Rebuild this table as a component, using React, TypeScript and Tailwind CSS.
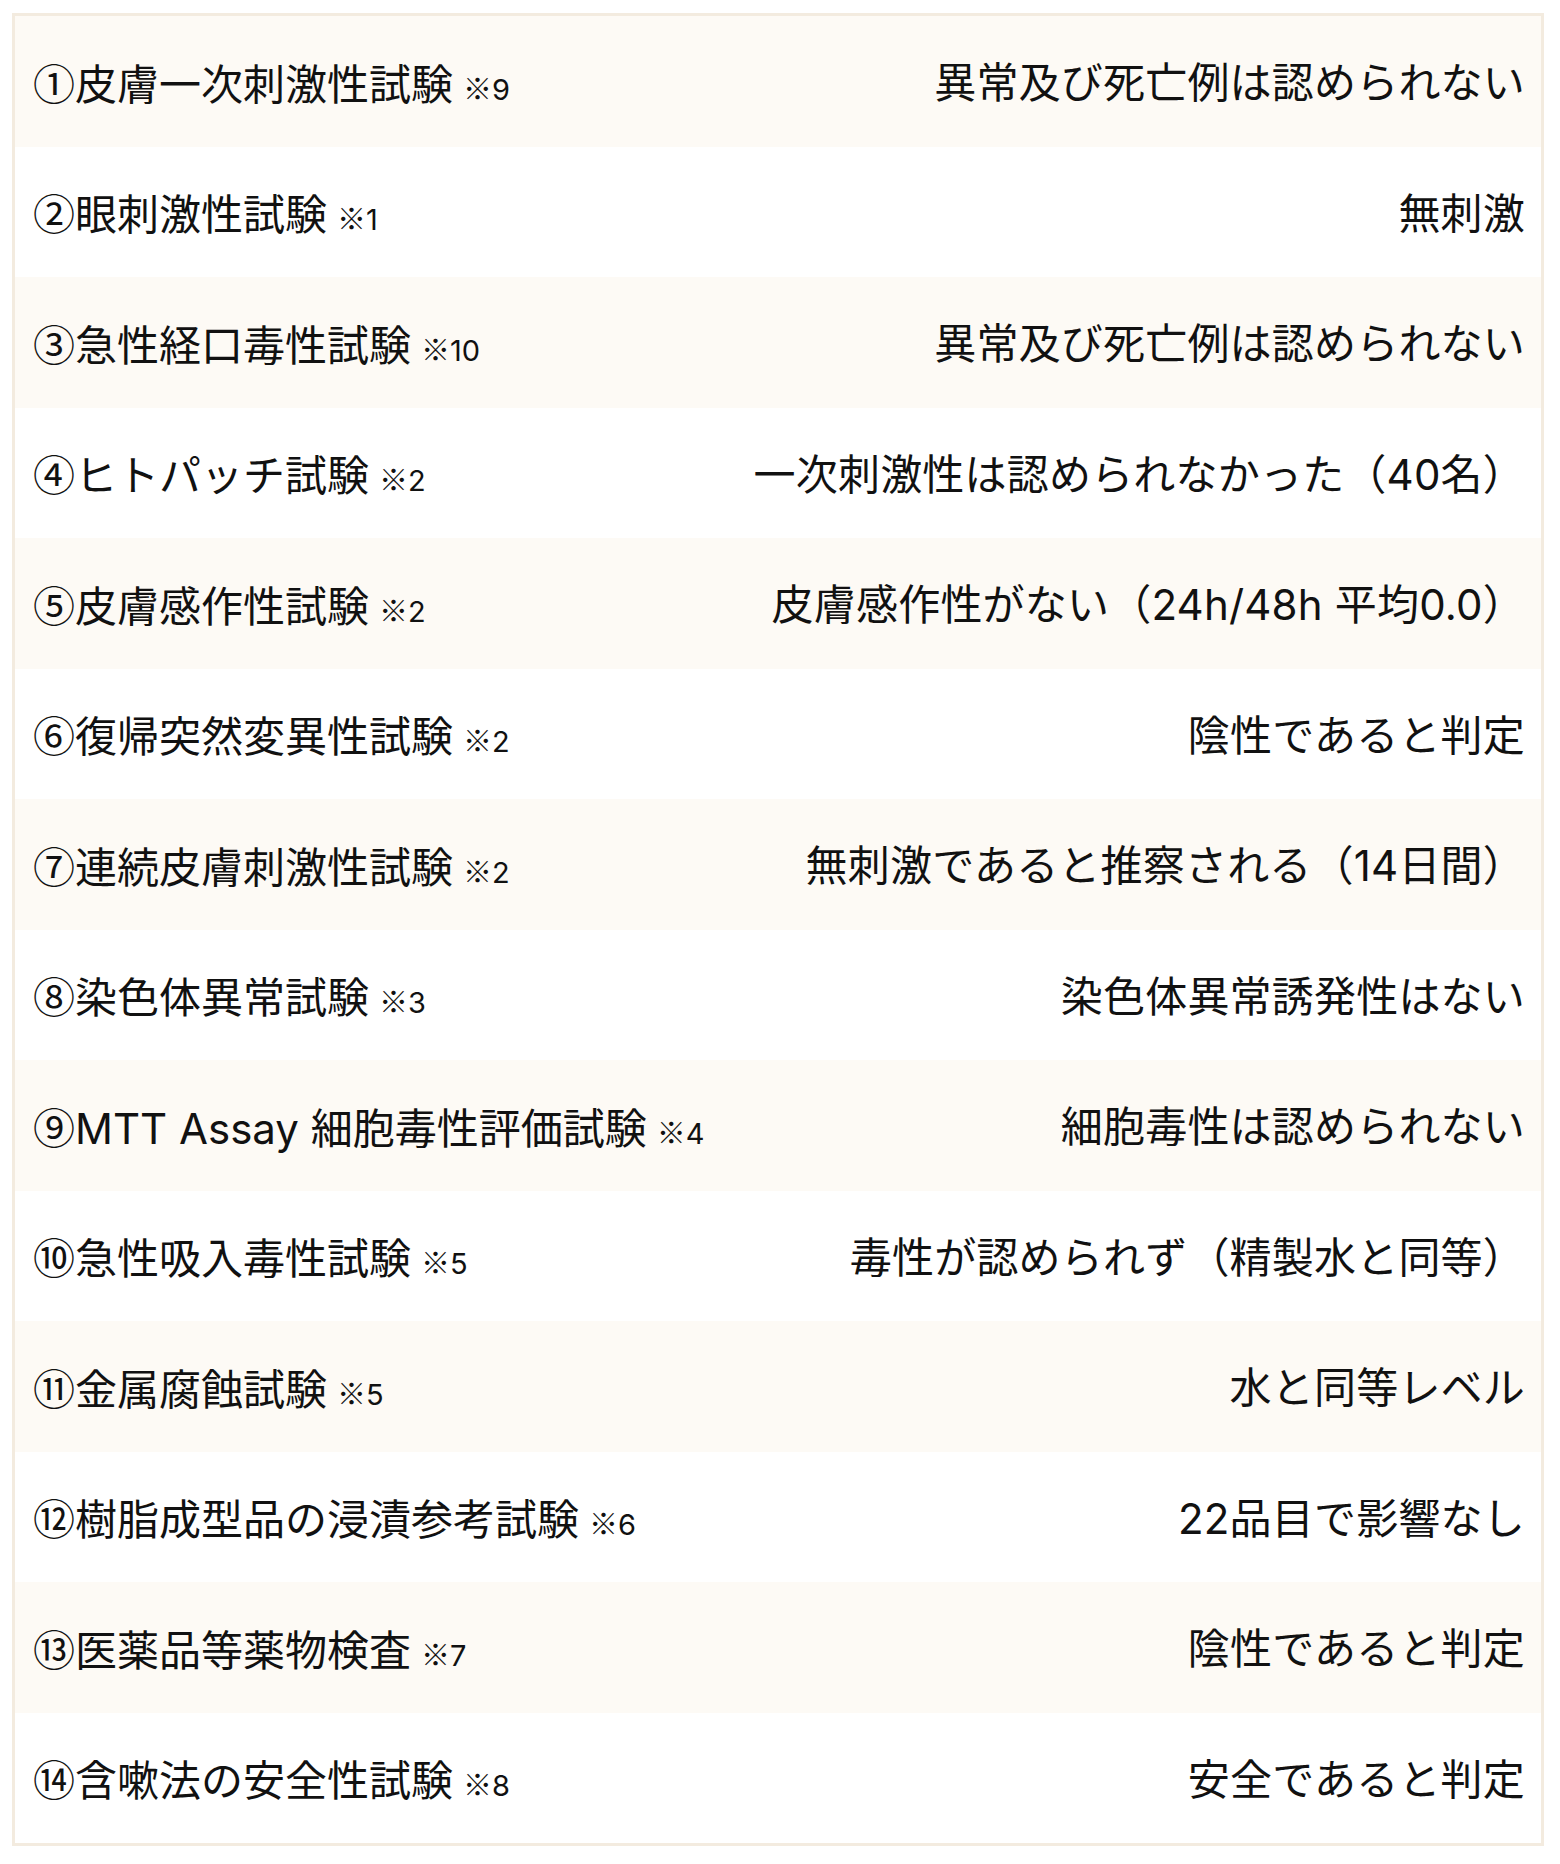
const rows: { label: string; note: string; result: string }[] = [
  { label: "①皮膚一次刺激性試験", note: "9", result: "異常及び死亡例は認められない" },
  { label: "②眼刺激性試験", note: "1", result: "無刺激" },
  { label: "③急性経口毒性試験", note: "10", result: "異常及び死亡例は認められない" },
  { label: "④ヒトパッチ試験", note: "2", result: "一次刺激性は認められなかった（40名）" },
  { label: "⑤皮膚感作性試験", note: "2", result: "皮膚感作性がない（24h/48h 平均0.0）" },
  { label: "⑥復帰突然変異性試験", note: "2", result: "陰性であると判定" },
  { label: "⑦連続皮膚刺激性試験", note: "2", result: "無刺激であると推察される（14日間）" },
  { label: "⑧染色体異常試験", note: "3", result: "染色体異常誘発性はない" },
  { label: "⑨MTT Assay 細胞毒性評価試験", note: "4", result: "細胞毒性は認められない" },
  { label: "⑩急性吸入毒性試験", note: "5", result: "毒性が認められず（精製水と同等）" },
  { label: "⑪金属腐蝕試験", note: "5", result: "水と同等レベル" },
  { label: "⑫樹脂成型品の浸漬参考試験", note: "6", result: "22品目で影響なし" },
  { label: "⑬医薬品等薬物検査", note: "7", result: "陰性であると判定" },
  { label: "⑭含嗽法の安全性試験", note: "8", result: "安全であると判定" },
];

const cjk = { fontFamily: '"Noto Sans CJK JP", sans-serif' };

export default function App() {
  return (
    <div
      className="min-h-[1864px] bg-white px-[12px] pt-[13px] text-[#111]"
      style={{ fontFamily: 'Inter, "Noto Sans CJK JP", sans-serif' }}
    >
      <div className="w-[1532px] border-[3px] border-[#f3ebdf]">
        {rows.map((row, i) => (
          <div
            key={row.label}
            className={`flex h-[130.5px] items-center justify-between pl-[18px] pr-[16px] pt-[4px] ${
              i % 2 === 0 ? "bg-[#fdfaf5]" : "bg-white"
            }`}
          >
            <div className="whitespace-nowrap text-[42px] leading-none">
              <span style={cjk}>{row.label[0]}</span>
              {row.label.slice(1)}
              <span className="ml-[10px] text-[29px]">
                <span style={cjk}>※</span>
                {row.note}
              </span>
            </div>
            <div className="whitespace-nowrap text-right text-[42px] leading-none tracking-[0.2px]">{row.result}</div>
          </div>
        ))}
      </div>
    </div>
  );
}
